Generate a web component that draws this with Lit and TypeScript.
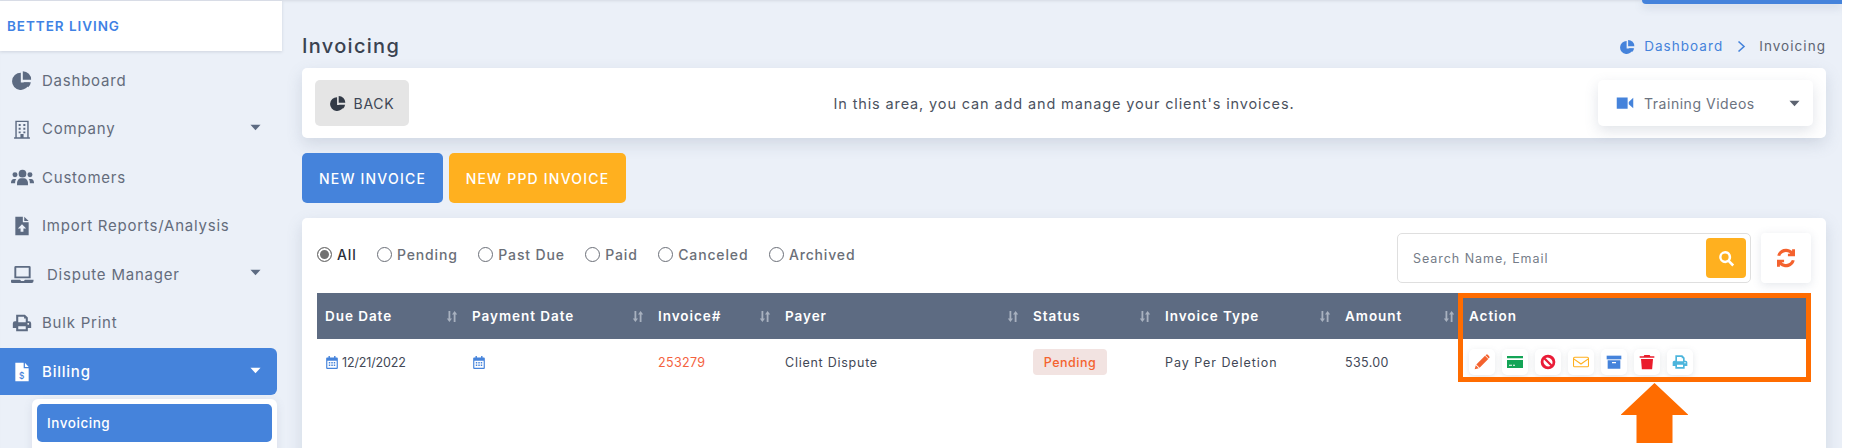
import { LitElement, html, css, svg } from "lit";
import { customElement } from "lit/decorators.js";

const pie = svg`<path d="M10.600 3.200A10.400 10.400 0 1 0 20.800 15H10.600Z"/><path d="M13 1.400A10 10 0 0 1 23 11.600H13Z"/><path d="M13.600 14.600H22.600A10 10 0 0 1 19.400 20.800Z"/>`;
const icons: Record<string, unknown> = {
  pie,
  building: svg`<path fill-rule="evenodd" d="M4 2h16v20h1.500v1.600h-19V22H4ZM5.700 3.700V22h4.400v-4h3.800v4h4.400V3.700Z"/><path d="M8 6h2.400v2.400H8zM13.600 6H16v2.400h-2.400zM8 10.500h2.400v2.400H8zM13.600 10.500H16v2.400h-2.400zM8 15h2.400v2H8zM13.600 15H16v2h-2.400z"/>`,
  users: svg`<circle cx="12" cy="8" r="4"/><circle cx="4.200" cy="9.200" r="2.600"/><circle cx="19.800" cy="9.200" r="2.600"/><path d="M6.300 20v-2.400c0-3 2.400-4.800 4-4.800h3.400c1.600 0 4 1.800 4 4.800V20Z"/><path d="M0 17.500c0-2.500 1.300-4 3-4h2.500c-.9 1-1.200 2.500-1.200 4.500H0ZM24 17.500c0-2.500-1.300-4-3-4h-2.500c.9 1 1.200 2.500 1.200 4.500H24Z"/>`,
  fileImport: svg`<path fill-rule="evenodd" d="M4 1h9v6.500h7V23H4ZM12 10l-5 5h3.300v4h3.400v-4H17Z"/><path d="M14.700 1 20 6h-5.300Z"/>`,
  laptop: svg`<path fill-rule="evenodd" d="M3.500 4.500A1.500 1.500 0 0 1 5 3h14a1.500 1.500 0 0 1 1.500 1.500V16h-17ZM5.500 5v9h13V5Z"/><path d="M.5 17.500h9l1 1.200h3l1-1.200h9v1.300a2 2 0 0 1-2 2h-20a2 2 0 0 1-2-2Z"/>`,
  print: svg`<path fill-rule="evenodd" d="M5 2h10.500L19 5.500V10h1.500A2.500 2.500 0 0 1 23 12.500V18h-4v4H5v-4H1v-5.500A2.500 2.500 0 0 1 3.500 10H5ZM7.500 4.500V11h9V6.500h-2v-2ZM7.500 16v3.500h9V16Z"/><circle cx="19.500" cy="13" r="1.100" fill="#fff"/>`,
  calendar: svg`<path fill-rule="evenodd" d="M6 1h2.400v2.500h7.200V1H18v2.500h2A1.800 1.800 0 0 1 22 5.300v16A1.800 1.800 0 0 1 20 23H4a1.800 1.800 0 0 1-2-1.700v-16A1.800 1.800 0 0 1 4 3.500h2ZM4 9v12h16V9Z"/><path d="M6.500 11h2.500v2.500H6.500zM10.800 11h2.500v2.500h-2.500zM15 11h2.500v2.500H15zM6.500 15.300h2.500v2.500H6.500zM10.800 15.300h2.500v2.500h-2.500zM15 15.300h2.500v2.500H15z"/>`,
  pencil: svg`<path d="M16.500 2.600 21.400 7.500 8.400 20.500 3.500 15.600ZM18 1.300c.8-.8 2-.8 2.800 0l1.900 1.900c.8.8.8 2 0 2.800l-.6.6-4.800-4.800ZM2.700 16.800l4.500 4.500L1 23Z"/>`,
  card: svg`<path d="M0 3h24v3.500H0zM0 9h24v12H0z"/><path d="M3 16h4.500v1.800H3zM9 16h3v1.800H9z" fill="#fff"/>`,
  ban: svg`<path fill-rule="evenodd" d="M12 1a11 11 0 1 1 0 22 11 11 0 0 1 0-22ZM5.900 8.300A7.500 7.500 0 0 0 15.700 18.100ZM8.300 5.900 18.100 15.700A7.500 7.500 0 0 0 8.300 5.900Z"/>`,
  envelope: svg`<path fill-rule="evenodd" d="M2.500 4h19A2.500 2.500 0 0 1 24 6.500v11a2.500 2.500 0 0 1-2.500 2.500h-19A2.500 2.500 0 0 1 0 17.500v-11A2.500 2.500 0 0 1 2.500 4Zm0 1.600a1 1 0 0 0-.9.800v.5L12 14 22.400 6.900v-.5a1 1 0 0 0-.9-.8ZM1.600 8.800v8.700a.9.900 0 0 0 .9.900h19a.9.900 0 0 0 .9-.9V8.800L12 16Z"/>`,
  archive: svg`<path d="M1 2.500h22V8H1z"/><path fill-rule="evenodd" d="M2.500 9.500h19V22h-19Zm6.500 2.500v1.800h6V12Z"/>`,
  trash: svg`<path d="M8 1.500h8l1 1.700h6v2.300H1V3.200h6Z"/><path d="M3 7.500h18l-1.300 15.500H4.300Z"/>`,
  caret: svg`<path d="M1 6h22L12 18Z"/>`,
  video: svg`<path d="M1 4.500h14.500v15H1zM17 10.500 23 5v14l-6-5.500Z"/>`,
  search: svg`<path fill-rule="evenodd" d="M10 1.500a8.500 8.500 0 0 1 7 13.300l5.800 5.800-2.600 2.600-5.800-5.800A8.500 8.500 0 1 1 10 1.500Zm0 3.500a5 5 0 1 0 0 10 5 5 0 0 0 0-10Z"/>`,
  sync: svg`<path d="M19.300 1.500 22.800 1.500V10H14.300V6.800L17.100 6.800A7.500 7.500 0 0 0 5 9.500L1.500 9A11 11 0 0 1 19.300 3.500Z"/><path d="M4.700 22.500H1.200V14H9.700V17.200L6.900 17.200A7.500 7.500 0 0 0 19 14.500L22.500 15A11 11 0 0 1 4.700 20.500Z"/>`,
  sort: svg`<path d="M5 1h3.600v15H12l-5.200 7L1.600 16H5Z"/><path d="M15.400 23H19V8h3.400l-5.200-7L12 8h3.400Z"/>`,
};

function ic(name: string, cls = "") {
  return html`<svg class="ic ${cls}" viewBox="0 0 24 24" fill="currentColor" aria-hidden="true">${icons[name]}</svg>`;
}

const menu = [
  { icon: "pie", label: "Dashboard" },
  { icon: "building", label: "Company", caret: true },
  { icon: "users", label: "Customers", wide: true },
  { icon: "fileImport", label: "Import Reports/Analysis" },
  { icon: "laptop", label: "Dispute Manager", caret: true, wide: true, far: true },
  { icon: "print", label: "Bulk Print" },
];
const filters = ["All", "Pending", "Past Due", "Paid", "Canceled", "Archived"];
const columns = ["Due Date", "Payment Date", "Invoice#", "Payer", "Status", "Invoice Type", "Amount"];
const actions = [
  { i: "pencil", c: "#f4622e" },
  { i: "card", c: "#13a456" },
  { i: "ban", c: "#ea1c37" },
  { i: "envelope", c: "#ffb01f" },
  { i: "archive", c: "#4583db" },
  { i: "trash", c: "#ea1c2c" },
  { i: "print", c: "#4cb5dc" },
];

@customElement("app-root")
export class AppRoot extends LitElement {
  static styles = css`
    :host {
      display: block;
      width: 1862px;
      height: 448px;
      overflow: hidden;
      background: #fff;
      font-family: Inter, "Open Sans", sans-serif;
      color: #3e4756;
      font-size: 13px;
      -webkit-font-smoothing: antialiased;
    }
    .shell { display: flex; width: 1842px; height: 448px; background: #ebf0f8; overflow: hidden; position: relative; box-shadow: inset 0 3px 3px -2px #d4d9e2; }
    .ic { display: block; flex: none; }
    .side { width: 282px; flex: none; padding-top: 1px; }
    .logo { height: 50px; background: #fff; box-shadow: 0 1px 3px rgba(90,100,120,.2); display: flex; align-items: center; padding-left: 7px; color: #3f82e4; font-weight: 600; font-size: 13.500px; letter-spacing: .95px; }
    .menu { margin-top: 5px; }
    .item { height: 48.500px; display: flex; align-items: center; padding-left: 12px; width: 277px; box-sizing: border-box; color: #646c7c; font-size: 15px; letter-spacing: .78px; position: relative; }
    .item .ic { width: 20px; height: 20px; margin-right: 10px; color: #5d6b82; }
    .item.wide .ic { width: 23px; height: 23px; margin-right: 8px; margin-left: -1px; }
    .item.far .ic { margin-right: 13px; }
    .item .ic.car, .item.wide .ic.car { width: 11px; height: 11px; position: absolute; right: 16px; top: calc(50% - 7px); margin: 0; }
    .item.active { height: 47px; margin-top: 1px; background: #4583db; color: #fff; border-radius: 0 6px 6px 0; font-weight: 500; }
    .item.active .ic { color: #fff; }
    .sub { width: 245px; margin: 4px 0 0 32px; background: #fff; border-radius: 6px 6px 0 0; padding: 5px; box-sizing: border-box; height: 60px; box-shadow: 0 2px 10px rgba(90,105,135,.12); }
    .subitem { height: 38px; background: #4583db; color: #fff; border-radius: 5px; display: flex; align-items: center; padding-left: 10px; font-size: 13.500px; font-weight: 500; letter-spacing: .55px; }
    .page { flex: 1; min-width: 0; display: flex; flex-direction: column; }
    .topbar { height: 4px; display: flex; justify-content: flex-end; flex: none; }
    .tab { width: 200px; background: #4583db; border-radius: 0 0 0 5px; box-shadow: 0 3px 8px rgba(90,110,140,.25); }
    .content { padding: 27px 16px 0 20px; position: relative; flex: 1; }
    .head { height: 30px; display: flex; align-items: center; justify-content: space-between; margin-bottom: 7px; }
    h1 { margin: 0; font-size: 20px; font-weight: 500; color: #3a4250; letter-spacing: 1.3px; }
    .crumbs { display: flex; align-items: center; font-size: 13.500px; letter-spacing: 1.05px; color: #5e6573; }
    .crumbs .pie { width: 15px; height: 15px; color: #4583db; margin-right: 9px; }
    .crumbs a { color: #4583db; }
    .crumbs .chev { width: 9px; height: 13px; margin: 0 13px 0 14px; }
    .card { background: #fff; border-radius: 5px; box-shadow: 0 6px 16px rgba(90,105,135,.18); }
    .intro { height: 70px; display: grid; grid-template-columns: 1fr auto 1fr; align-items: center; padding: 0 13px; }
    .back { width: 94px; height: 46px; background: #e5e5e5; border-radius: 5px; display: flex; align-items: center; justify-content: center; font-size: 14px; letter-spacing: .7px; color: #3e4756; }
    .back .ic { width: 16px; height: 16px; margin-right: 8px; color: #333b47; }
    .intro p { text-align: center; margin: 0; font-size: 14.500px; letter-spacing: .87px; color: #4b5260; }
    .training { justify-self: end; width: 215px; height: 46px; border-radius: 5px; box-shadow: 0 5px 14px rgba(90,105,135,.18); display: flex; align-items: center; padding-left: 18px; box-sizing: border-box; color: #6c7380; font-size: 14px; letter-spacing: .53px; }
    .training .vid { width: 18px; height: 18px; margin-right: 10px; color: #4583db; }
    .training .car { width: 11px; height: 11px; margin-left: auto; margin-right: 13px; color: #5c6370; }
    .btns { display: flex; gap: 6px; margin-top: 15px; }
    .btn { height: 50px; border-radius: 5px; color: #fff; display: flex; align-items: center; justify-content: center; font-size: 14px; font-weight: 500; letter-spacing: 1.2px; }
    .blue { width: 141px; background: #4583db; }
    .amber { width: 177px; background: #ffb01f; }
    .list { margin-top: 15px; height: 300px; padding: 15px; box-sizing: border-box; position: relative; }
    .tools { display: flex; align-items: center; height: 50px; margin-bottom: 10px; }
    .filters { display: flex; align-items: center; gap: 20.500px; transform: translateY(-4px); }
    .radio { display: flex; align-items: center; gap: 5px; font-size: 14px; letter-spacing: .85px; color: #6b6f78; font-weight: 500; }
    .radio i { width: 15px; height: 15px; box-sizing: border-box; border: 1px solid #6b6f78; border-radius: 50%; display: block; background: #fff; }
    .radio.on { color: #2a2f38; }
    .radio.on i { background: #737373; box-shadow: inset 0 0 0 2px #fff; border-color: #737373; }
    .search { margin-left: auto; width: 354px; height: 50px; box-sizing: border-box; border: 1px solid #dfdfdf; border-radius: 5px; display: flex; align-items: center; padding: 0 4px 0 15px; color: #757c88; font-size: 12.500px; letter-spacing: .95px; }
    .go { margin-left: auto; width: 40px; height: 40px; background: #ffb01f; border-radius: 4px; color: #fff; display: flex; align-items: center; justify-content: center; }
    .go .ic { width: 17px; height: 17px; }
    .refresh { width: 50px; height: 50px; margin-left: 10px; border-radius: 4px; background: #fff; box-shadow: 0 2px 10px rgba(90,105,135,.16); display: flex; align-items: center; justify-content: center; color: #f4622e; }
    .refresh .ic { width: 20px; height: 20px; }
    .grid { display: grid; grid-template-columns: 147px 186px 127px 248px 132px 180px 124px 350px; }
    .th { height: 46px; background: #5d6b82; color: #fff; font-size: 13.500px; font-weight: 600; letter-spacing: .95px; display: flex; align-items: center; padding: 0 6px 0 8px; justify-content: space-between; }
    .th .ic { width: 12px; height: 13px; color: #a8b1bf; }
    .td { height: 46px; display: flex; align-items: center; padding-left: 8px; font-size: 12.500px; letter-spacing: .75px; color: #424856; }
    .td.num { letter-spacing: -.15px; }
    .td.type { letter-spacing: .95px; }
    .td.fig { letter-spacing: .35px; }
    .td .cal { width: 14px; height: 15px; color: #4583db; margin-right: 3px; }
    .red { color: #f4623e; letter-spacing: .35px; }
    .badge { width: 74px; height: 26px; border-radius: 4px; background: #f2e3e1; color: #f4622e; display: flex; align-items: center; justify-content: center; font-weight: 500; letter-spacing: .5px; }
    .acts { display: flex; gap: 7px; }
    .act { width: 26px; height: 26px; border-radius: 5px; display: flex; align-items: center; justify-content: center; background: #fff; box-shadow: 0 2px 6px rgba(100,110,130,.17); }
    .act .ic { width: 16px; height: 16px; }
    .mark { position: absolute; left: 1156px; top: 75px; width: 353px; height: 89px; box-sizing: border-box; border: 5px solid #ff6c00; pointer-events: none; }
    .arrow { position: absolute; left: 1319px; top: 165px; width: 67px; height: 60px; color: #ff6c00; }
  `;

  render() {
    return html`
      <div class="shell">
        <aside class="side">
          <div class="logo">BETTER LIVING</div>
          <nav class="menu">
            ${menu.map((m) => html`<div class="item ${m.wide ? "wide" : ""} ${m.far ? "far" : ""}">${ic(m.icon)}<span>${m.label}</span>${m.caret ? ic("caret", "car") : ""}</div>`)}
            <div class="item active">
              <svg class="ic" viewBox="0 0 24 24" fill="currentColor"><path d="M4 1h10v6.500h6V23H4Z"/><path d="M15.500 1 20 6h-4.500Z"/><text x="12" y="20" font-size="10" text-anchor="middle" fill="#4583db" font-family="Inter">$</text></svg>
              <span>Billing</span>${ic("caret", "car")}
            </div>
            <div class="sub"><div class="subitem">Invoicing</div></div>
          </nav>
        </aside>
        <main class="page">
          <div class="topbar"><div class="tab"></div></div>
          <div class="content">
            <div class="head">
              <h1>Invoicing</h1>
              <div class="crumbs">
                ${ic("pie", "pie")}<a>Dashboard</a>
                <svg class="ic chev" viewBox="0 0 9 13" fill="none" stroke="#4583db" stroke-width="1.600"><path d="M1.500 1.500 7 6.500 1.500 11.500"/></svg>
                <span>Invoicing</span>
              </div>
            </div>
            <section class="card intro">
              <div class="back">${ic("pie")}BACK</div>
              <p>In this area, you can add and manage your client's invoices.</p>
              <div class="training">${ic("video", "vid")}<span>Training Videos</span>${ic("caret", "car")}</div>
            </section>
            <div class="btns">
              <div class="btn blue">NEW INVOICE</div>
              <div class="btn amber">NEW PPD INVOICE</div>
            </div>
            <section class="card list">
              <div class="tools">
                <div class="filters">
                  ${filters.map((f, i) => html`<label class="radio ${i === 0 ? "on" : ""}"><i></i>${f}</label>`)}
                </div>
                <div class="search"><span>Search Name, Email</span><div class="go">${ic("search")}</div></div>
                <div class="refresh">${ic("sync")}</div>
              </div>
              <div class="grid">
                ${columns.map((c) => html`<div class="th"><span>${c}</span>${ic("sort")}</div>`)}
                <div class="th">Action</div>
                <div class="td num">${ic("calendar", "cal")}12/21/2022</div>
                <div class="td">${ic("calendar", "cal")}</div>
                <div class="td red">253279</div>
                <div class="td">Client Dispute</div>
                <div class="td fig"><span class="badge">Pending</span></div>
                <div class="td type">Pay Per Deletion</div>
                <div class="td fig">535.00</div>
                <div class="td">
                  <div class="acts">
                    ${actions.map((a) => html`<div class="act" style="color:${a.c}">${ic(a.i)}</div>`)}
                  </div>
                </div>
              </div>
              <div class="mark"></div>
              <svg class="arrow" viewBox="0 0 67 60" fill="currentColor"><path d="M33.500 0 67 31.500V32H51.500V60H15.500V32H0V31.500Z"/></svg>
            </section>
          </div>
        </main>
      </div>
    `;
  }
}
